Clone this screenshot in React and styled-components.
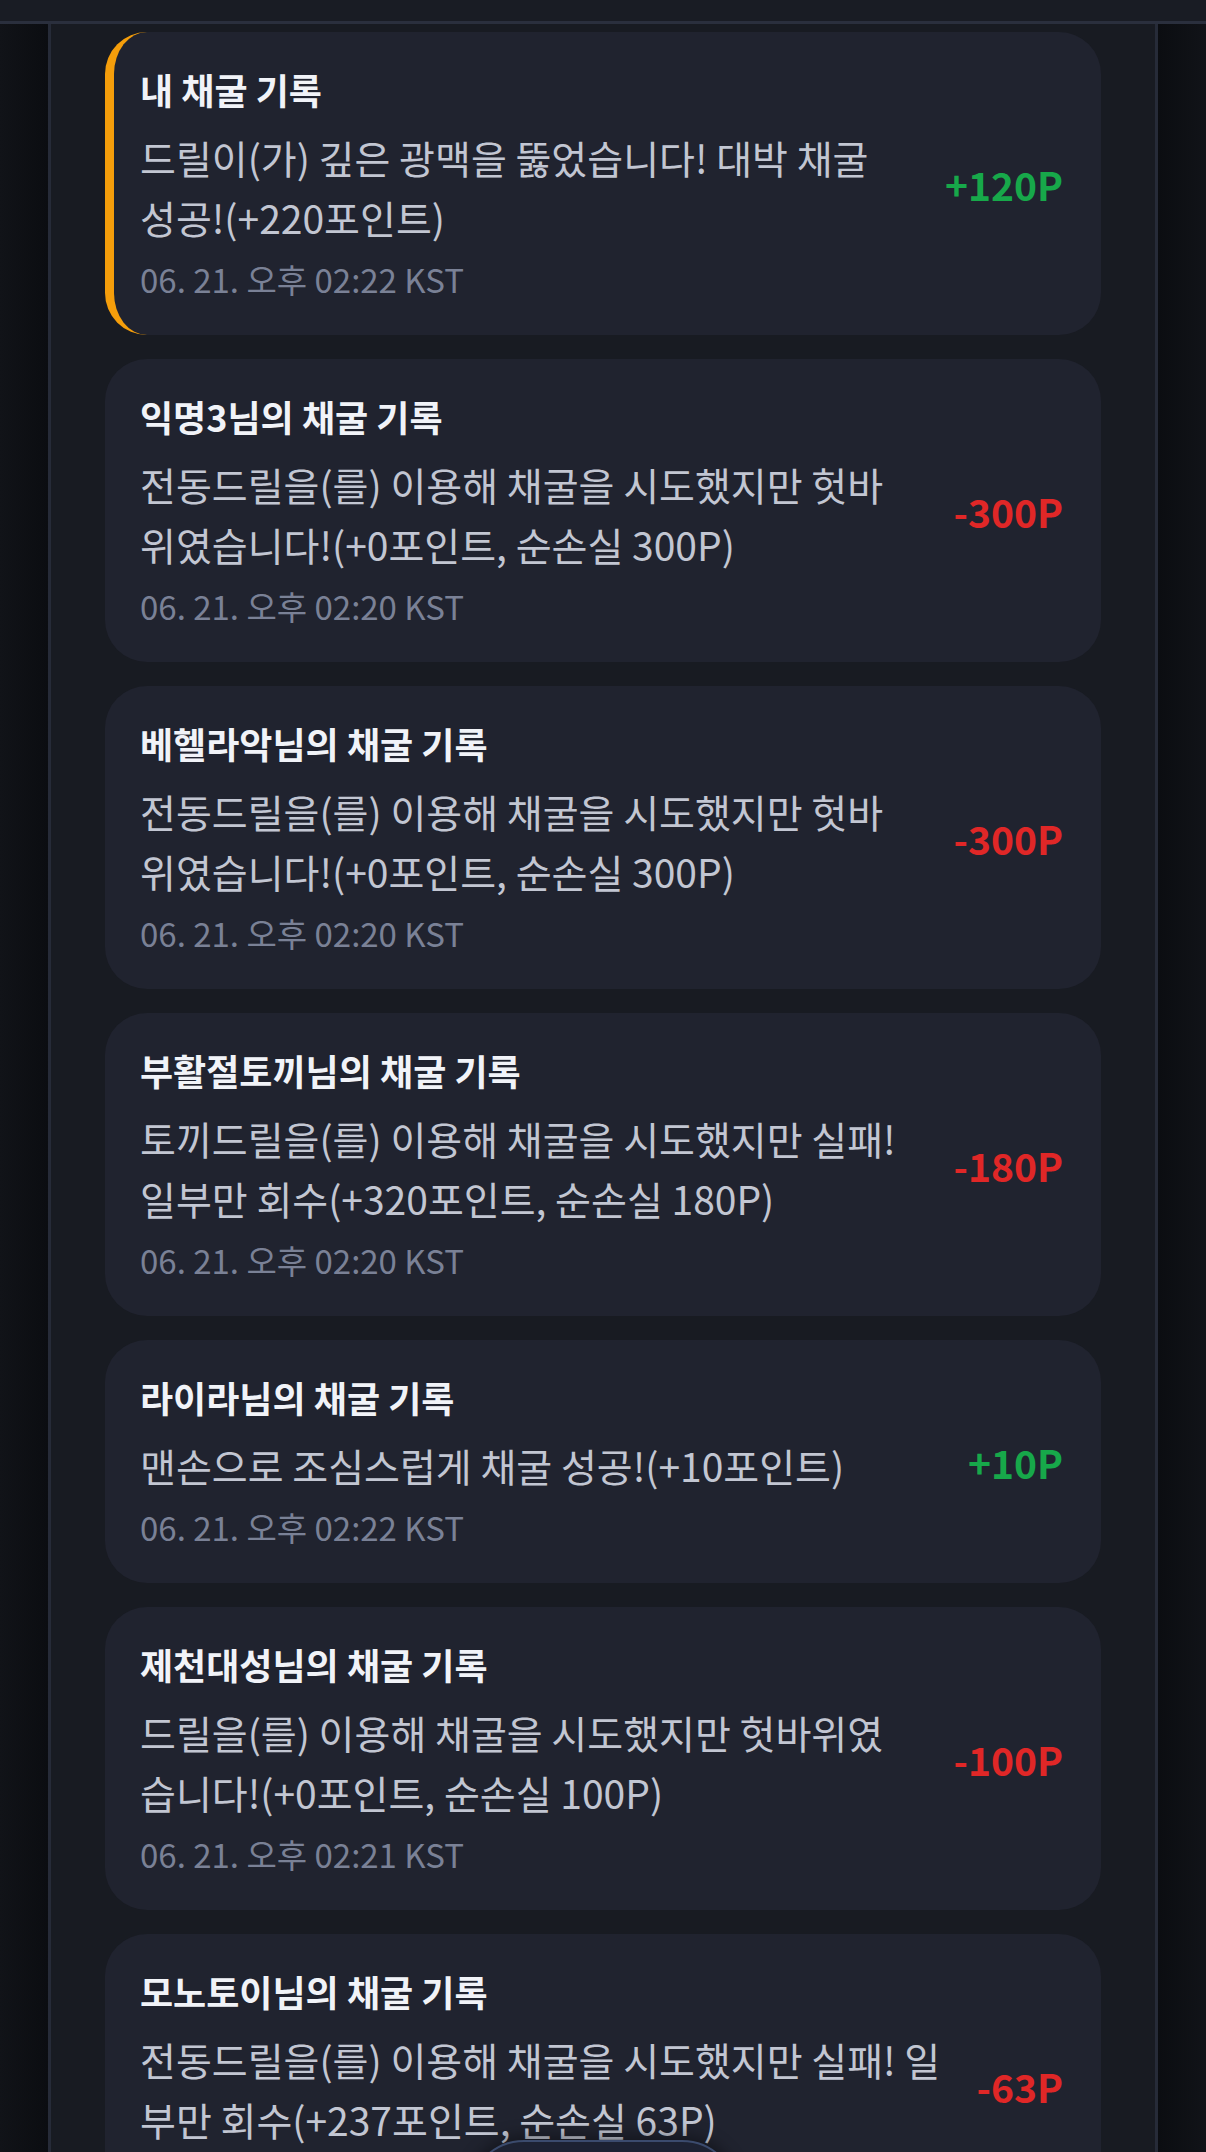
import styled, { createGlobalStyle } from "styled-components";

const GlobalStyle = createGlobalStyle`
  html, body {
    margin: 0;
    padding: 0;
    background: #0c0e13;
  }
  body {
    font-family: "Noto Sans CJK KR", "Noto Sans", sans-serif;
    -webkit-font-smoothing: antialiased;
  }
`;

const records = [
  {
    id: 1,
    title: "내 채굴 기록",
    message: "드릴이(가) 깊은 광맥을 뚫었습니다! 대박 채굴 성공!(+220포인트)",
    time: "06. 21. 오후 02:22 KST",
    points: 120,
    mine: true,
  },
  {
    id: 2,
    title: "익명3님의 채굴 기록",
    message:
      "전동드릴을(를) 이용해 채굴을 시도했지만 헛바위였습니다!(+0포인트, 순손실 300P)",
    time: "06. 21. 오후 02:20 KST",
    points: -300,
  },
  {
    id: 3,
    title: "베헬라악님의 채굴 기록",
    message:
      "전동드릴을(를) 이용해 채굴을 시도했지만 헛바위였습니다!(+0포인트, 순손실 300P)",
    time: "06. 21. 오후 02:20 KST",
    points: -300,
  },
  {
    id: 4,
    title: "부활절토끼님의 채굴 기록",
    message:
      "토끼드릴을(를) 이용해 채굴을 시도했지만 실패! 일부만 회수(+320포인트, 순손실 180P)",
    time: "06. 21. 오후 02:20 KST",
    points: -180,
  },
  {
    id: 5,
    title: "라이라님의 채굴 기록",
    message: "맨손으로 조심스럽게 채굴 성공!(+10포인트)",
    time: "06. 21. 오후 02:22 KST",
    points: 10,
  },
  {
    id: 6,
    title: "제천대성님의 채굴 기록",
    message:
      "드릴을(를) 이용해 채굴을 시도했지만 헛바위였습니다!(+0포인트, 순손실 100P)",
    time: "06. 21. 오후 02:21 KST",
    points: -100,
  },
  {
    id: 7,
    title: "모노토이님의 채굴 기록",
    message:
      "전동드릴을(를) 이용해 채굴을 시도했지만 실패! 일부만 회수(+237포인트, 순손실 63P)",
    time: "06. 21. 오후 02:21 KST",
    points: -63,
  },
];

function formatPoints(points) {
  return points > 0 ? `+${points}P` : `${points}P`;
}

export default function App() {
  return (
    <Page>
      <GlobalStyle />
      <TopBar />
      <Panel>
        <RecordList>
          {records.map((record) => (
            <RecordCard key={record.id} $mine={record.mine}>
              <RecordBody>
                <RecordTitle>{record.title}</RecordTitle>
                <RecordMessage>{record.message}</RecordMessage>
                <RecordTime>{record.time}</RecordTime>
              </RecordBody>
              <RecordPoints $gain={record.points > 0}>
                {formatPoints(record.points)}
              </RecordPoints>
            </RecordCard>
          ))}
        </RecordList>
      </Panel>
      <FloatingButton type="button" aria-label="more" />
    </Page>
  );
}

const Page = styled.div`
  min-height: 100vh;
  background: linear-gradient(
    90deg,
    #111318 0px,
    #0b0d11 48px,
    #0b0d11 calc(100% - 48px),
    #111318 100%
  );
`;

const TopBar = styled.header`
  height: 21px;
  background: #191c24;
  border-bottom: 3px solid #2a2f3d;
`;

const Panel = styled.main`
  width: 1110px;
  margin: 0 auto;
  box-sizing: border-box;
  background: #181b22;
  border-left: 3px solid #262b38;
  border-right: 3px solid #262b38;
  padding: 8px 54px 120px;
`;

const RecordList = styled.ul`
  list-style: none;
  margin: 0;
  padding: 0;
  display: flex;
  flex-direction: column;
  gap: 24px;
`;

const RecordCard = styled.li`
  display: flex;
  align-items: center;
  background: #20232f;
  border-radius: 42px;
  padding: 35px 38px 34px ${(p) => (p.$mine ? "26px" : "35px")};
  border-left: ${(p) => (p.$mine ? "9px solid #f59e0b" : "none")};
`;

const RecordBody = styled.div`
  flex: 1;
  min-width: 0;
  display: flex;
  flex-direction: column;
`;

const RecordTitle = styled.h3`
  margin: 0;
  font-size: 36px;
  line-height: 44px;
  font-weight: 700;
  color: #f1f3f8;
`;

const RecordMessage = styled.p`
  margin: 16px 0 0;
  font-size: 39px;
  line-height: 60px;
  font-weight: 400;
  color: #c2c6d2;
`;

const RecordTime = styled.span`
  margin-top: 10px;
  font-size: 33px;
  line-height: 44px;
  color: #7a8196;
`;

const RecordPoints = styled.span`
  flex-shrink: 0;
  margin-left: 36px;
  font-size: 39px;
  font-weight: 700;
  color: ${(p) => (p.$gain ? "#17a84a" : "#e02727")};
`;

const FloatingButton = styled.button`
  position: fixed;
  left: 50%;
  bottom: -100px;
  transform: translateX(-50%);
  width: 270px;
  height: 112px;
  border-radius: 56px;
  border: 2px solid #3b4b6d;
  background: #1d2232;
  box-shadow: 0 -4px 16px rgba(0, 0, 0, 0.4);
`;
